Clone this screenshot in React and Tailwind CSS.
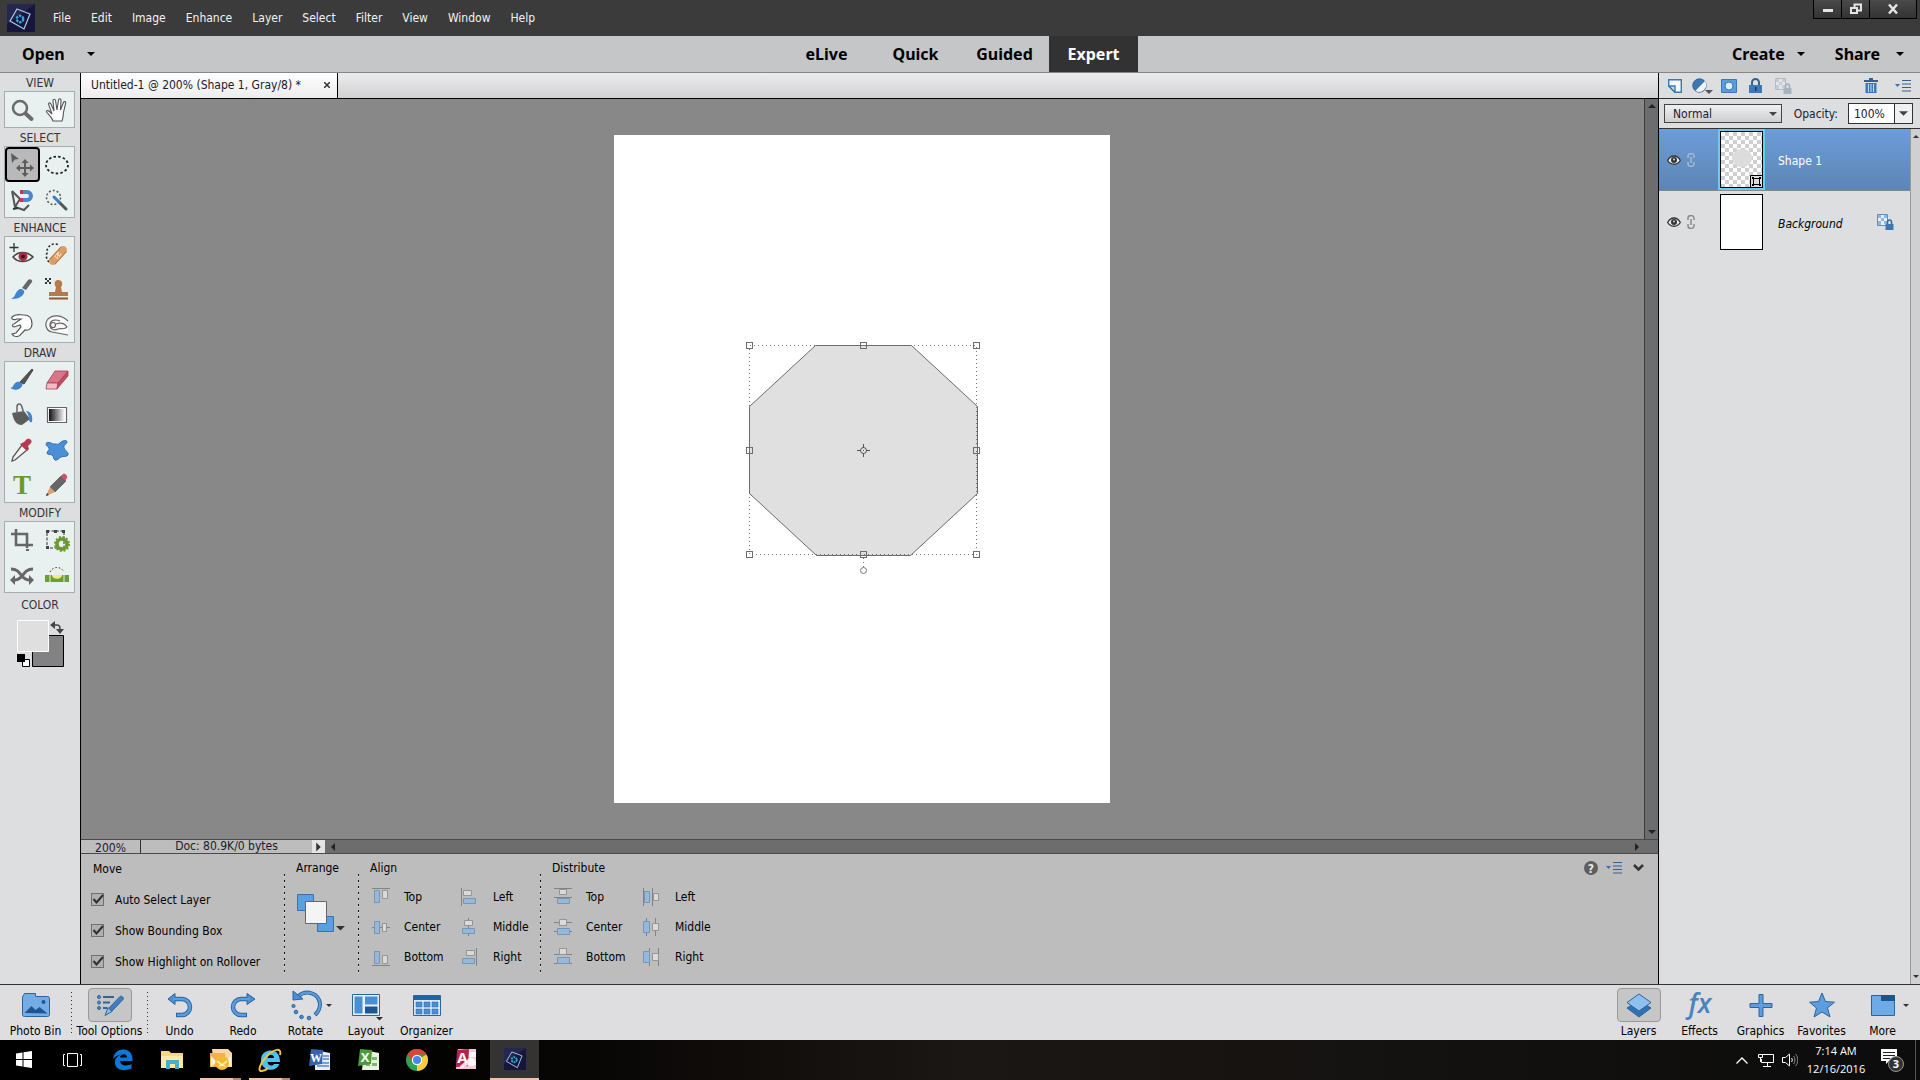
import React, { useState } from "react";

const menus = ["File", "Edit", "Image", "Enhance", "Layer", "Select", "Filter", "View", "Window", "Help"];
const modes = ["eLive", "Quick", "Guided", "Expert"];

function Caret({ className }) {
  return (
    <svg aria-hidden="true" className={className || "w-2 h-1"} viewBox="0 0 8 4" fill="currentColor">
      <path d="M0 0h8L4 4z" />
    </svg>
  );
}

function ElementsLogo({ className }) {
  return (
    <svg aria-hidden="true" className={className} viewBox="0 0 28 28" fill="none">
      <rect width="28" height="28" fill="#16163a" />
      <path d="M0 0h28L0 20z" fill="#26264e" />
      <path d="M10 5l13 5-6 15-14-8z" stroke="#a9cbe8" strokeWidth="1.2" />
      <circle cx="13" cy="15" r="3.2" stroke="#38a8e0" strokeWidth="2.4" strokeDasharray="2.4 1" />
    </svg>
  );
}

function MenuBar() {
  return (
    <header className="flex items-start h-9 bg-[#3b3b3b] text-[#f2f2f2]">
      <ElementsLogo className="w-7 h-7 mt-1 ml-[7px]" />
      <nav className="flex gap-5 h-9 items-center ml-[18px]">
        {menus.map((menu) => (
          <button type="button" key={menu}>
            {menu}
          </button>
        ))}
      </nav>
      <div className="flex ml-auto mr-[3px] h-[19px] border border-t-0 border-black bg-linear-to-b from-[#4a4a4a] to-[#333]">
        <button type="button" aria-label="Minimize" className="w-7 grid place-items-center border-r border-black">
          <svg className="w-3 h-3" viewBox="0 0 12 12" fill="#e4e4e4">
            <path d="M1 6h10v3H1z" />
          </svg>
        </button>
        <button type="button" aria-label="Restore" className="w-7 grid place-items-center border-r border-black">
          <svg className="w-3 h-3" viewBox="0 0 12 12" fill="none" stroke="#e4e4e4" strokeWidth="2">
            <path d="M4.5 4V1.5H11v6H8M1 5h6v5H1z" />
          </svg>
        </button>
        <button type="button" aria-label="Close" className="w-[46px] grid place-items-center">
          <svg className="w-3 h-3" viewBox="0 0 12 12" fill="none" stroke="#e4e4e4" strokeWidth="2.5">
            <path d="M2 1.5l8 9M10 1.5l-8 9" />
          </svg>
        </button>
      </div>
    </header>
  );
}

function ModeBar() {
  return (
    <div className="grid grid-cols-[1fr_auto_1fr] h-[37px] border-b border-[#85868a] bg-[#c5c6c8] text-black font-['Noto_Sans',sans-serif] text-base font-bold">
      <button type="button" className="flex items-center gap-[22px] pl-[22px]">
        Open <Caret />
      </button>
      <div className="flex">
        {modes.map((mode) => (
          <button
            type="button"
            key={mode}
            className={mode === "Expert" ? "w-[89px] bg-[#323232] text-white" : "w-[89px]"}
          >
            {mode}
          </button>
        ))}
      </div>
      <div className="flex justify-end gap-[30px] pr-4">
        <button type="button" className="flex items-center gap-3">
          Create <Caret />
        </button>
        <button type="button" className="flex items-center gap-4">
          Share <Caret />
        </button>
      </div>
    </div>
  );
}

/* toolbox icons, 26 x 26 */
const toolIcons = {
  Zoom: (
    <g fill="none" stroke="#6b6b6b">
      <circle cx="11" cy="11" r="7" strokeWidth="2.5" />
      <path d="M16.5 16.5l6 5.5" strokeWidth="4" strokeLinecap="round" />
    </g>
  ),
  Hand: (
    <path
      d="M9 24c-1-4-4-6-6.500-9-.5-1.500 1.500-2 3-.5L8 17 4.500 7c0-1.500 2-1.500 2.500 0l3 7L9 3.500c0-1.700 2.200-1.700 2.500 0L13 13l1.500-10c.3-1.600 2.500-1.500 2.500.2L16.500 13l3-7.500c.6-1.500 2.500-1 2.200.6L19.500 15c-.5 4 0 5-1.500 9z"
      fill="#fff"
      stroke="#555"
      strokeWidth="1.1"
    />
  ),
  Move: (
    <g fill="#5c5c5c">
      <path d="M2 1l8 6-4 .5L3 11z" />
      <path d="M16 7l3.500 4H17v4h4v-2.500l4 3.500-4 3.500V17h-4v4h2.500L16 25l-3.500-4H15v-4h-4v2.500L7 16l4-3.500V15h4v-4h-2.500z" />
    </g>
  ),
  "Elliptical marquee": (
    <ellipse cx="13" cy="13" rx="11" ry="8.5" fill="none" stroke="#222" strokeWidth="1.8" strokeDasharray="2.5 2.2" />
  ),
  Lasso: (
    <g fill="none">
      <path d="M3 4l3 16 9 3 5-5M3 4l8 8-5 8" stroke="#555" strokeWidth="2" />
      <path d="M4 22l5-1" stroke="#333" strokeWidth="2" />
      <path d="M14 5h4a4 4 0 010 8h-4" stroke="#4a86c8" strokeWidth="4" />
      <path d="M11 5h3M11 13h3" stroke="#c23a50" strokeWidth="4" />
    </g>
  ),
  "Quick selection": (
    <g fill="none">
      <circle cx="9.5" cy="10.5" r="7" stroke="#555" strokeWidth="1.5" strokeDasharray="2 2" />
      <path d="M15 15l7 7" stroke="#555" strokeWidth="3" strokeLinecap="round" />
      <path d="M10 10l5 5" stroke="#3b7dc4" strokeWidth="3" strokeLinecap="round" />
    </g>
  ),
  "Red eye": (
    <g fill="none">
      <path d="M5 1v9M.5 5.5h9" stroke="#333" strokeWidth="1.3" />
      <path d="M4 15c5-6 14-6 20 0-6 6-15 6-20 0z" fill="#eee" stroke="#444" strokeWidth="1.5" />
      <circle cx="14" cy="14.5" r="4.5" fill="#a63048" />
      <circle cx="14" cy="14.5" r="2" fill="#4c1020" />
    </g>
  ),
  "Spot healing": (
    <g fill="none">
      <path d="M5 20a8 8 0 01-2-9 8 8 0 0112-8" stroke="#222" strokeWidth="1.6" strokeDasharray="2 2" />
      <path d="M8 20L20 7" stroke="#a66430" strokeWidth="8" />
      <path d="M8.500 19.500L19.500 7.500" stroke="#dc9c62" strokeWidth="6.5" strokeLinecap="round" />
      <path d="M12 16l4-5" stroke="#f6cfa4" strokeWidth="5" />
      <path d="M12 14h1M15 12h1M14 15h1" stroke="#a66430" strokeWidth="1.2" />
    </g>
  ),
  "Smart brush": (
    <g>
      <path d="M13 11l6-8c2-2 5 0 4 2l-6 8z" fill="#666" />
      <path d="M2 22c5-2 4-8 9-10 3 0 5 2 4 4-2 5-8 6-13 6z" fill="#3f86d0" />
    </g>
  ),
  "Clone stamp": (
    <g>
      <path d="M1 1h2v2H1zM5 1h2v2H5zM3 3h2v2H3zM1 5h2v2H1zM5 5h2v2H5z" fill="#333" />
      <path d="M14 3c5 0 5 5 3 7l1 5h6v4H5v-4h6l1-5c-2-2-2-7 2-7z" fill="#b5794a" />
      <path d="M5 20.5h19v2H5z" fill="#8a5a34" />
    </g>
  ),
  Smudge: (
    <path
      d="M3 5c4-4 8-2 12-2 6 0 8 4 8 9 0 4-3 7-7 6l-4 4c-1 2-4 3-7 2l-2-2 4-1 5-6-1-2-6 2c-2 0-2-3 0-3l7-5H8c-2 1-6 1-5-2z"
      fill="#fff"
      stroke="#555"
      strokeWidth="1.2"
    />
  ),
  Sponge: (
    <g fill="#f8f8f8" stroke="#666" strokeWidth="1.2">
      <path d="M24 9C18 3 9 2 4 7c-4 5-2 12 4 13l16 3" />
      <path d="M16 9c-5-2-10-1-10 4 0 4 4 6 8 4 2-1 7 1 9-2-2-3-6-5-11-3" />
      <circle cx="9" cy="13" r="2.5" />
    </g>
  ),
  Brush: (
    <g>
      <path d="M11 15L23 2l1 1-9 14z" fill="#555" stroke="#444" />
      <path d="M2 21c3 0 2-5 7-6 4 0 5 3 3 5-2 3-7 3-10 1z" fill="#3f86d0" stroke="#2b66a8" strokeWidth=".5" />
    </g>
  ),
  Eraser: (
    <g strokeWidth=".8" stroke="#a84056">
      <path d="M11 4h13L14 16H3z" fill="#d9768a" />
      <path d="M3 16h11l-1 6H2z" fill="#f5bcc6" />
      <path d="M24 4v5L13 22l1-6z" fill="#c24c62" />
    </g>
  ),
  "Paint bucket": (
    <g>
      <path d="M3 11l12-2 6 8-8 6c-5 0-8-3-10-12z" fill="#5c5c5c" />
      <path d="M8 12V5c0-4 4-4 5 0l2 7" fill="none" stroke="#666" strokeWidth="1.5" />
      <path d="M17 9c5 0 7 5 6 11-2 1-3-1-3-3 0-3-1-5-3-8z" fill="#3f86d0" />
    </g>
  ),
  Gradient: (
    <g>
      <defs>
        <linearGradient id="ramp">
          <stop offset="0" stopColor="#111" />
          <stop offset="1" stopColor="#fff" />
        </linearGradient>
      </defs>
      <path d="M3.5 5.5h19v15h-19z" fill="#fff" stroke="#666" strokeWidth="1.2" />
      <path d="M5 7h16v12H5z" fill="url(#ramp)" />
    </g>
  ),
  "Color picker": (
    <g>
      <path d="M13 8l5 5L6 23l-3 1 1-4z" fill="#f4f4f4" stroke="#555" strokeWidth="1.3" />
      <path d="M13 6l2-1 3-3c3-1 6 2 4 4l-3 3 1 3-2 2-7-7z" fill="#b83850" />
    </g>
  ),
  "Custom shape": (
    <path
      d="M11 7c2 0 3 1 5-1 3-3 7-3 7-1s-4 3-3 6 5 4 4 7c-1 2-5 1-7 2s-4 4-6 3-1-4-3-5-5 0-5-2 3-3 2-5-3-2-3-4 3-2 5-1 2 1 4 1z"
      fill="#4a8fd8"
      stroke="#3570b0"
    />
  ),
  Type: (
    <text x="13" y="22" textAnchor="middle" fontSize="27" fontWeight="bold" fill="#6a9a2c" className="font-['Liberation_Serif',serif]">
      T
    </text>
  ),
  Pencil: (
    <g>
      <path d="M6 15L17 4l5 5L11 20z" fill="#666" stroke="#444" strokeWidth=".6" />
      <path d="M17 4l2-2c2-1 5 2 4 4l-2 3z" fill="#d05068" />
      <path d="M6 15l5 5-9 4z" fill="#dca070" />
      <path d="M2 24l1-3 2 2z" fill="#333" />
    </g>
  ),
  Crop: (
    <g fill="none" stroke="#666" strokeWidth="2.6">
      <path d="M7 2v16h17M2 7h16v14" />
      <path d="M17 23h3" strokeWidth="2" />
    </g>
  ),
  Recompose: (
    <g>
      <path d="M3 4h17v17H3z" fill="none" stroke="#333" strokeDasharray="3 1.5" />
      <path d="M2 3h3v3H2zM18 3h3v3h-3zM2 19h3v3H2zM10 3h3v3h-3z" fill="#444" />
      <circle cx="18" cy="17" r="5" fill="none" stroke="#6a9a2c" strokeWidth="3.5" />
      <circle cx="18" cy="17" r="7" fill="none" stroke="#6a9a2c" strokeWidth="2" strokeDasharray="2 1.7" />
    </g>
  ),
  "Content-aware move": (
    <g fill="none" stroke="#666" strokeWidth="3">
      <path d="M2 7c11 0 9 11 18 11M24 7c-11 0-9 11-18 11" />
      <path d="M20 13l5 5-5 5zM6 13l-5 5 5 5z" fill="#666" stroke="none" />
    </g>
  ),
  Straighten: (
    <g>
      <path d="M6 10c3-6 11-6 14 0" fill="none" stroke="#333" strokeDasharray="1.5 2" />
      <path d="M1 13h24v7H1z" fill="#6d9e35" />
      <path d="M6 13v7M20 13v7" stroke="#e8f0e0" />
      <path d="M8 13h10c0 5-10 5-10 0z" fill="#f4eb82" />
    </g>
  ),
};

const toolGroups = [
  { name: "VIEW", tools: ["Zoom", "Hand"] },
  { name: "SELECT", tools: ["Move", "Elliptical marquee", "Lasso", "Quick selection"] },
  { name: "ENHANCE", tools: ["Red eye", "Spot healing", "Smart brush", "Clone stamp", "Smudge", "Sponge"] },
  { name: "DRAW", tools: ["Brush", "Eraser", "Paint bucket", "Gradient", "Color picker", "Custom shape", "Type", "Pencil"] },
  { name: "MODIFY", tools: ["Crop", "Recompose", "Content-aware move", "Straighten"] },
];

function Toolbox() {
  const [tool, setTool] = useState("Move");

  return (
    <aside className="w-[81px] shrink-0 border-r border-black bg-[#dddee0] px-1 text-[#333]">
      {toolGroups.map((group) => (
        <section key={group.name}>
          <h2 className="h-[18px] leading-5 text-center">{group.name}</h2>
          <div className="grid grid-cols-2 w-[71px] border border-[#a9acae] bg-[#e9f0f0]">
            {group.tools.map((name) => (
              <button
                type="button"
                key={name}
                title={name}
                onClick={() => setTool(name)}
                className={
                  tool === name
                    ? "h-[35px] grid place-items-center rounded-sm border-2 border-black bg-[#b9b9b9]"
                    : "h-[35px] grid place-items-center"
                }
              >
                <svg aria-hidden="true" className="w-[26px] h-[26px] overflow-visible" viewBox="0 0 26 26">
                  {toolIcons[name]}
                </svg>
              </button>
            ))}
          </div>
        </section>
      ))}
      <section>
        <h2 className="h-[26px] leading-6 text-center">COLOR</h2>
        <svg role="img" aria-label="Foreground and background color" className="w-12 h-12 mx-auto" viewBox="0 0 48 48">
          <path d="M16.5 16.5h31v31h-31z" fill="#828282" stroke="#000" />
          <path d="M1.5 1.5h31v31h-31z" fill="#dfdfdf" stroke="#fff" />
          <path d="M37 6h4c3 0 3 2 3 5" fill="none" stroke="#444" strokeWidth="1.5" />
          <path d="M34 6l5-4v8zM40 10h8l-4 5z" fill="#444" />
          <path d="M6.5 40.5h7v7h-7z" fill="#fff" stroke="#000" />
          <path d="M1 35h8v8H1z" />
        </svg>
      </section>
    </aside>
  );
}

const handles = [
  [749, 345], [863, 345], [976, 345],
  [749, 450], [976, 450],
  [749, 554], [863, 554], [976, 554],
];

function Artboard() {
  return (
    <div className="w-[496px] h-[668px] bg-white">
      <svg role="img" aria-label="Octagon shape" className="w-full h-full" viewBox="614 135 496 668" fill="none" shapeRendering="crispEdges">
        <path
          d="M815.5 345.5H911.5L977.5 406.5V493.5L910.5 555.5H816.5L749.5 493.5V406.5z"
          fill="#e0e0e0"
          stroke="#6a6a6a"
          shapeRendering="auto"
        />
        <path d="M749.5 345.5h227v209h-227zM863.5 558v9" stroke="#777" strokeDasharray="1 3" />
        {handles.map(([x, y]) => (
          <rect key={`${x}-${y}`} x={x - 2.5} y={y - 2.5} width="6" height="6" stroke="#6e6e6e" />
        ))}
        <g stroke="#555" shapeRendering="auto">
          <circle cx="863.5" cy="450.5" r="3" />
          <path d="M863.5 444v4M863.5 453v4M857 450.5h4M866 450.5h4M863 450.5h1" />
          <circle cx="863.5" cy="570.5" r="3" stroke="#777" fill="#fff" />
        </g>
      </svg>
    </div>
  );
}

function Workspace() {
  return (
    <>
      <div className="flex h-[26px] border-b border-black bg-linear-to-b from-[#ececee] to-[#d2d2d3] text-[#1b1b2e]">
        <div className="flex items-center justify-between w-[257px] pl-[10px] pr-[7px] pb-px border-r border-black bg-linear-to-b from-white to-[#ececec]">
          <span className="whitespace-pre">Untitled-1 @ 200% (Shape 1, Gray/8) *</span>
          <button type="button" aria-label="Close document">
            <svg className="w-[6px] h-[6px]" viewBox="0 0 6 6" stroke="#333" strokeWidth="1.5">
              <path d="M0 0l6 6M6 0L0 6" />
            </svg>
          </button>
        </div>
      </div>
      <div className="flex grow bg-[#888] min-h-[740px]">
        <main className="flex grow items-center justify-center pr-0.5">
          <Artboard />
        </main>
        <div className="flex flex-col items-center justify-between w-[14px] border-l border-[#3a3a3a] bg-[#6d6d6d] text-[#222] py-[5px]">
          <Caret className="w-2 h-1 rotate-180" />
          <Caret />
        </div>
      </div>
      <div className="flex h-[15px] border-y border-[#4a4a4a] bg-[#6d6d6d] leading-[13px] text-[#1b1b2e] overflow-hidden">
        <div className="w-[60px] border-r border-[#333] bg-[#bdbdbd] text-center leading-4">200%</div>
        <div className="w-[171px] bg-[#bdbdbd] text-center">Doc: 80.9K/0 bytes</div>
        <button type="button" aria-label="Status menu" className="w-[13px] grid place-items-center bg-[#e4e4e4] text-[#333]">
          <Caret className="w-[9px] h-[6px] -rotate-90" />
        </button>
        <div className="flex grow items-center justify-between pl-1 pr-[17px] text-[#222]">
          <Caret className="w-2 h-1 rotate-90" />
          <Caret className="w-2 h-1 -rotate-90" />
        </div>
      </div>
    </>
  );
}

/* each icon: rule lines, blue box, white box */
const alignItems = [
  { label: "Top", lines: "M0 .5h18", blue: "M2.5 2.5h5v12h-5z", white: "M10.5 2.5h5v8h-5z" },
  { label: "Left", lines: "M.5 0v18", blue: "M2.5 10.5h12v5h-12z", white: "M2.5 2.5h8v5h-8z" },
  { label: "Center", lines: "M0 9.5h18", blue: "M2.5 3.5h5v12h-5z", white: "M10.5 5.5h4v8h-4z" },
  { label: "Middle", lines: "M7.5 0v18", blue: "M1.5 10.5h12v5h-12z", white: "M3.5 2.5h8v5h-8z" },
  { label: "Bottom", lines: "M0 17.5h18", blue: "M2.5 3.5h5v12h-5z", white: "M10.5 7.5h5v8h-5z" },
  { label: "Right", lines: "M15.5 0v18", blue: "M1.5 10.5h12v5h-12z", white: "M5.5 2.5h8v5h-8z" },
];

const distributeItems = [
  { label: "Top", lines: "M0 .5h18M0 9.5h18", blue: "M3.5 10.5h12v5h-12z", white: "M5.5 1.5h7v5h-7z" },
  { label: "Left", lines: "M.5 0v18M9.5 0v18", blue: "M1.5 3.5h5v11h-5z", white: "M10.5 5.5h5v7h-5z" },
  { label: "Center", lines: "M0 4.5h18M0 13.5h18", blue: "M3.5 10.5h12v6h-12z", white: "M5.5 1.5h7v6h-7z" },
  { label: "Middle", lines: "M3.5 0v18M12.5 0v18", blue: "M.5 3.5h6v11h-6z", white: "M9.5 5.5h6v7h-6z" },
  { label: "Bottom", lines: "M0 6.5h18M0 15.5h18", blue: "M3.5 9.5h12v6h-12z", white: "M5.5 .5h7v6h-7z" },
  { label: "Right", lines: "M6.5 0v18M15.5 0v18", blue: "M.5 3.5h6v11h-6z", white: "M9.5 5.5h6v7h-6z" },
];

function ArrangeGrid({ title, items }) {
  return (
    <section className="pt-[6px]">
      <h3 className="h-4 leading-4">{title}</h3>
      <div className="grid grid-cols-[89px_89px] mt-[6px] ml-[2px]">
        {items.map((item) => (
          <button type="button" key={item.label} className="flex items-center gap-[14px] h-[30px]">
            <svg aria-hidden="true" className="w-[18px] h-[18px]" viewBox="0 0 18 18">
              <path d={item.lines} stroke="#828282" />
              <path d={item.blue} fill="#97b8d8" stroke="#7497b8" />
              <path d={item.white} fill="#dadada" stroke="#949494" />
            </svg>
            {item.label}
          </button>
        ))}
      </div>
    </section>
  );
}

function DottedRule() {
  return <div className="w-[3px] h-[100px] mt-5 bg-[repeating-linear-gradient(#111_0_2px,#e8e8e8_2px_3px,transparent_3px_6px)] bg-clip-content px-px" />;
}

function CheckOption({ label }) {
  const [checked, setChecked] = useState(true);

  return (
    <label className="flex items-center gap-[11px] h-[31px]">
      <span className="grid">
        <input
          type="checkbox"
          checked={checked}
          onChange={(e) => setChecked(e.target.checked)}
          className="peer col-start-1 row-start-1 appearance-none w-[13px] h-[13px] border border-[#707070] bg-[#b0b0b0]"
        />
        <svg
          aria-hidden="true"
          className="hidden peer-checked:block col-start-1 row-start-1 w-[13px] h-[13px] pointer-events-none"
          viewBox="0 0 13 13"
          fill="none"
          stroke="#2f2f2f"
          strokeWidth="2"
        >
          <path d="M2.5 6l3 3.5L12 2" />
        </svg>
      </span>
      {label}
    </label>
  );
}

function PanelMenuIcon() {
  return (
    <svg aria-hidden="true" className="w-4 h-3" viewBox="0 0 16 12">
      <path d="M0 4h5L2.5 7z" fill="#3570ad" />
      <path d="M7 .5h9M7 4h9M7 7.5h9M7 11h9" stroke="#35608c" />
    </svg>
  );
}

function ToolOptions() {
  return (
    <div className="flex h-[130px] bg-[#bdbdbd] text-black">
      <section className="w-[202px] pl-[10px] pt-[6px]">
        <h3 className="h-[18px] leading-[18px] pl-[2px]">Move</h3>
        <div className="mt-[6px]">
          <CheckOption label="Auto Select Layer" />
          <CheckOption label="Show Bounding Box" />
          <CheckOption label="Show Highlight on Rollover" />
        </div>
      </section>
      <DottedRule />
      <section className="w-[71px] pl-[10px] pt-[6px]">
        <h3 className="h-4 leading-4">Arrange</h3>
        <button type="button" aria-label="Arrange" className="mt-[17px] ml-px">
          <svg className="w-12 h-[39px]" viewBox="0 0 48 39">
            <path d="M.5 1.5h16v16H.5z" fill="#5a9fe0" stroke="#3a72ab" />
            <path d="M20.5 23.5h16v15h-16z" fill="#5a9fe0" stroke="#3a72ab" />
            <path d="M8.5 8.5h21v22h-21z" fill="#f4f4f4" stroke="#666" />
            <path d="M39 33h9l-4.500 4.500z" fill="#333" />
          </svg>
        </button>
      </section>
      <DottedRule />
      <div className="w-[179px] pl-[10px]">
        <ArrangeGrid title="Align" items={alignItems} />
      </div>
      <DottedRule />
      <div className="pl-[10px]">
        <ArrangeGrid title="Distribute" items={distributeItems} />
      </div>
      <div className="flex items-start gap-2 ml-auto pt-[7px] pr-[14px]">
        <button type="button" aria-label="Help">
          <svg className="w-[14px] h-[14px]" viewBox="0 0 14 14">
            <circle cx="7" cy="7" r="7" fill="#5e5e5e" />
            <text x="7" y="11.5" textAnchor="middle" fontSize="12" fontWeight="bold" fill="#e8e8e8">
              ?
            </text>
          </svg>
        </button>
        <button type="button" aria-label="Panel menu" className="pt-px">
          <PanelMenuIcon />
        </button>
        <button type="button" aria-label="Collapse panel" className="pt-[3px] pl-[3px]">
          <svg className="w-[11px] h-2" viewBox="0 0 11 8" fill="none" stroke="#333" strokeWidth="2.5">
            <path d="M1 1l4.500 4.500L10 1" />
          </svg>
        </button>
      </div>
    </div>
  );
}

function LockedPixels({ className }) {
  return (
    <svg aria-hidden="true" className={className} viewBox="0 0 17 16">
      <path d="M.5 .5h10v11H.5z" fill="#e8f0f8" stroke="#5d90c2" />
      <path d="M1 1h3v3H1zM7 1h3v3H7zM4 4h3v3H4zM1 7h3v4H1zM7 7h3v3H7z" fill="#8db8e0" />
      <path d="M10.5 10V8a2 2 0 014 0v2" fill="none" stroke="#2f6ba6" strokeWidth="1.5" />
      <path d="M8.5 10h8v6h-8z" fill="#3c78b4" />
    </svg>
  );
}

function EyeIcon() {
  return (
    <svg aria-hidden="true" className="w-[14px] h-[10px]" viewBox="0 0 14 10">
      <path d="M.7 5.500c3-6 9.600-6 12.600 0-3 5-9.600 5-12.600 0z" fill="#eee" stroke="#333" strokeWidth="1.3" />
      <circle cx="7" cy="5" r="3" fill="#333" />
      <circle cx="7" cy="4.5" r="1" fill="#ddd" />
    </svg>
  );
}

function LinkIcon({ className }) {
  return (
    <svg aria-hidden="true" className={className} viewBox="0 0 8 14" fill="none" stroke="currentColor" strokeWidth="1.5">
      <path d="M1 5V3a3 2.500 0 016 0v2M1 9v2a3 2.500 0 006 0V9M4 4v6" />
    </svg>
  );
}

function LayersPanel() {
  const [blend, setBlend] = useState("Normal");
  const [opacity, setOpacity] = useState("100%");

  return (
    <aside className="flex flex-col w-[262px] shrink-0 border-l border-black bg-[#dddee0]">
      <div className="flex items-center h-[26px] border-b border-[#333] pl-[9px] pr-[9px]">
        <button type="button" aria-label="New layer">
          <svg className="w-[14px] h-[14px]" viewBox="0 0 14 14">
            <path d="M.7 .7h12.600v12.600H7L.7 7z" fill="#f4f8fc" stroke="#3a78b5" strokeWidth="1.4" />
            <path d="M.7 7H7v6.300z" fill="#c8ddf0" stroke="#3a78b5" strokeWidth="1.4" />
          </svg>
        </button>
        <button type="button" aria-label="Adjustment layer" className="ml-[10px]">
          <svg className="w-[21px] h-4" viewBox="0 0 21 16">
            <circle cx="7.5" cy="7.5" r="6.7" fill="#3c78b4" stroke="#2f6294" />
            <path d="M13 3a7 7 0 01-9.500 9.800z" fill="#f2f6fa" />
            <path d="M13 12h8l-4 4z" fill="#555" />
          </svg>
        </button>
        <button type="button" aria-label="Layer mask" className="ml-2">
          <svg className="w-4 h-[14px]" viewBox="0 0 16 14">
            <path d="M.5 .5h15v13H.5z" fill="#5a9bdc" stroke="#3a78b5" />
            <circle cx="8" cy="7" r="4" fill="#e3eefa" stroke="#3a78b5" />
          </svg>
        </button>
        <button type="button" aria-label="Lock all pixels" className="ml-3">
          <svg className="w-[13px] h-4" viewBox="0 0 13 16">
            <path d="M3 8V4.500a3.500 3.500 0 017 0V8" fill="none" stroke="#2f6294" strokeWidth="2" />
            <path d="M0 7h13v8H0z" fill="#3c78b4" />
            <path d="M6 9h1.500v4H6z" fill="#16395c" />
          </svg>
        </button>
        <button type="button" aria-label="Lock transparent pixels" disabled className="ml-[13px] opacity-40">
          <LockedPixels className="w-[17px] h-4 grayscale-50" />
        </button>
        <button type="button" aria-label="Delete layer" className="ml-auto">
          <svg className="w-[14px] h-[15px]" viewBox="0 0 14 15">
            <path d="M5 0h4v2H5zM0 2h14v2H0z" fill="#2f6294" />
            <path d="M1.5 5h11v10h-11z" fill="#3c78b4" />
            <path d="M4.5 6v8M7 6v8M9.5 6v8" stroke="#c8ddf0" />
          </svg>
        </button>
        <button type="button" aria-label="Panel menu" className="ml-[17px]">
          <PanelMenuIcon />
        </button>
      </div>

      <div className="flex items-center h-[30px] border-b border-[#333] pl-[5px] pr-[7px] text-[#1b1b2e]">
        <span className="grid items-center w-[118px]">
          <select
            aria-label="Blend mode"
            value={blend}
            onChange={(e) => setBlend(e.target.value)}
            className="col-start-1 row-start-1 appearance-none h-[19px] pl-2 leading-4 border border-[#444] bg-linear-to-b from-[#f0f0f0] to-[#cfcfcf]"
          >
            <option>Normal</option>
            <option>Multiply</option>
            <option>Screen</option>
            <option>Overlay</option>
          </select>
          <Caret className="col-start-1 row-start-1 justify-self-end mr-[5px] w-2 h-1 pointer-events-none text-[#444]" />
        </span>
        <label htmlFor="opacity" className="ml-auto mr-[10px]">
          Opacity:
        </label>
        <input
          id="opacity"
          value={opacity}
          onChange={(e) => setOpacity(e.target.value)}
          className="w-[47px] h-[21px] pl-[5px] border border-[#333] bg-white"
        />
        <button type="button" aria-label="Opacity slider" className="w-[18px] h-[21px] grid place-items-center border border-l-0 border-[#333] bg-[#f0f0f0] text-[#444]">
          <Caret className="w-[9px] h-[5px]" />
        </button>
      </div>

      <div className="flex grow">
        <ul className="grow">
          <li className="flex items-center h-[62px] pl-2 border-b border-[#888] bg-linear-to-b from-[#6c9dd9] to-[#5d85b5] text-white">
            <EyeIcon />
            <LinkIcon className="w-2 h-[14px] ml-[6px] text-[#a9b9cc]" />
            <span className="relative w-[47px] h-[61px] ml-[23px] p-[2px] bg-[#68cdf4]">
              <span className="grid place-items-center w-full h-full border border-black bg-[repeating-conic-gradient(#cfcfcf_0_25%,#fff_0_50%)] bg-size-[8px_8px]">
                <span className="w-5 h-[18px] rounded-full bg-[#dcdcdc] mb-1" />
              </span>
              <svg aria-hidden="true" className="absolute right-[2px] bottom-[2px] w-[13px] h-[13px]" viewBox="0 0 13 13">
                <path d="M.5 .5h12v12H.5z" fill="#ddd" stroke="#000" />
                <path d="M3.5 3.5h6v6h-6z" fill="none" stroke="#000" />
                <path d="M2 2h2v2H2zM9 2h2v2H9zM2 9h2v2H2zM9 9h2v2H9z" />
              </svg>
            </span>
            <span className="ml-[13px] pt-[3px]">Shape 1</span>
          </li>
          <li className="flex items-center h-[62px] pl-2 pr-4 text-black">
            <EyeIcon />
            <LinkIcon className="w-2 h-[14px] ml-[6px] text-[#8b8b8b]" />
            <span className="w-[43px] h-14 ml-[25px] border border-black bg-white" />
            <span className="ml-[15px] pt-[3px] italic">Background</span>
            <LockedPixels className="w-[17px] h-4 ml-auto" />
          </li>
        </ul>
        <div className="flex flex-col items-center justify-between w-[10px] py-[6px] border-l border-[#999] bg-[#d0d0d2] text-[#333]">
          <Caret className="w-[6px] h-[3px] rotate-180" />
          <Caret className="w-[6px] h-[3px]" />
        </div>
      </div>
    </aside>
  );
}

const blue = "#4a8fd4";
const edge = "#2c649c";

/* bottom bar icons, 28 x 28 */
const barIcons = {
  "Photo Bin": (
    <g stroke={edge}>
      <path d="M2.5 2.5h11v3h12a2 2 0 012 2v16a2 2 0 01-2 2h-23a2 2 0 01-2-2V6z" fill="#74ade6" />
      <path d="M2.5 22l7-7 4 4 4-3 8 6.500z" fill="#1d5690" stroke="none" />
      <circle cx="21.5" cy="11" r="2" fill="#1d5690" stroke="none" />
    </g>
  ),
  "Tool Options": (
    <g fill="none" stroke={edge}>
      <circle cx="3" cy="6" r="1.5" fill={blue} />
      <circle cx="3" cy="11.5" r="1.5" fill={blue} />
      <circle cx="3" cy="17" r="1.5" fill={blue} />
      <path d="M7 6h11M7 11.500h7M7 17h4" strokeWidth="2" />
      <path d="M13 17L24 5.500c2-1 4 1 3 3L16 20z" fill="#3f7fbf" />
      <path d="M12 16.500l4 4-7 4z" fill="#8bbcec" />
    </g>
  ),
  Undo: (
    <g fill="none">
      <path d="M7 8h9a7.500 7.500 0 010 16h-6" stroke={edge} strokeWidth="4.5" />
      <path d="M9 2.500v11L2 8z" fill={blue} stroke={edge} />
      <path d="M7 8h9a7.500 7.500 0 010 16h-5" stroke="#5b9ddf" strokeWidth="2.6" />
    </g>
  ),
  Redo: (
    <g fill="none">
      <path d="M20 8h-8a7.500 7.500 0 000 16h6" stroke={edge} strokeWidth="4.5" />
      <path d="M18 2.500v11L26 8z" fill={blue} stroke={edge} />
      <path d="M21 8h-9a7.500 7.500 0 000 16h5" stroke="#5b9ddf" strokeWidth="2.6" />
    </g>
  ),
  Rotate: (
    <g fill="none">
      <path d="M6 5.500C14-2 27 2 28 13c0 5-2 8-5 11" stroke={edge} strokeWidth="4" />
      <path d="M6 5.500C14-2 27 2 28 13c0 5-2 8-4.500 10.500" stroke="#5b9ddf" strokeWidth="2.2" />
      <path d="M1 0l10 8-10 1z" fill={blue} stroke={edge} />
      <g fill={blue} stroke={edge}>
        <circle cx="1.5" cy="15" r="1.6" />
        <circle cx="4" cy="21" r="1.8" />
        <circle cx="9.5" cy="26" r="1.8" />
        <circle cx="17" cy="27" r="1.8" />
      </g>
    </g>
  ),
  Layout: (
    <g>
      <path d="M.5 3.5h27v21H.5z" fill="#e8f2fc" stroke={edge} />
      <path d="M2.5 5.5h8v17h-8zM13 5.5h12.500v8H13z" fill={blue} />
      <path d="M13 15.5h12.500v7H13z" fill="#1d5690" />
      <path d="M24 26h7l-3.500 3.500z" fill="#333" />
    </g>
  ),
  Organizer: (
    <g>
      <path d="M.5 4.5h27v20H.5z" fill="#d8e8f8" stroke={edge} />
      <path d="M1 5h26v4H1z" fill="#1f62a6" />
      <path d="M3 11h6v5H3zM11 11h6v5h-6zM19 11h6v5h-6zM3 18h6v5H3zM11 18h6v5h-6zM19 18h6v5h-6z" fill={blue} stroke={edge} strokeWidth=".5" />
    </g>
  ),
  Layers: (
    <g stroke={edge}>
      <path d="M2 17l12 9 12-9-4-2.500-8 5-8-5z" fill="#2f73b5" />
      <path d="M14 3l12 8.500L14 20 2 11.500z" fill="#8fc0f0" />
    </g>
  ),
  Effects: (
    <text x="14" y="22" textAnchor="middle" fontSize="27" fontStyle="italic" fontWeight="600" fill="#4784c0" className="font-['Open_Sans',sans-serif]">
      fx
    </text>
  ),
  Graphics: <path d="M12 3.5h4v9h9v4h-9v9h-4v-9H3v-4h9z" fill="#5b9ddf" stroke={edge} />,
  Favorites: <path d="M14 2l3.500 8.500 9 .7-7 5.700 2.500 9L14 21l-8 5 2.500-9-7-5.800 9-.7z" fill="#5b9ddf" stroke={edge} />,
  More: (
    <g>
      <path d="M2.5 4.5h23v20h-23z" fill="#6eaae6" stroke={edge} />
      <path d="M12 4h14v6H12z" fill="#175696" />
    </g>
  ),
};

function BarButton({ name, width, pressed, caret }) {
  return (
    <button type="button" className={`${width} flex flex-col items-center`}>
      <span
        className={
          pressed
            ? "relative grid place-items-center h-9 px-[7px] rounded border border-[#999] bg-[#c6c6c6]"
            : "relative grid place-items-center h-9 px-2"
        }
      >
        <svg aria-hidden="true" className="w-7 h-7 overflow-visible" viewBox="0 0 28 28">
          {barIcons[name]}
        </svg>
        {caret && <Caret className="absolute -right-1 top-4 w-[6px] h-[3px] text-[#333]" />}
      </span>
      <span className="leading-[18px] whitespace-nowrap">{name}</span>
    </button>
  );
}

function BarRule() {
  return <div className="w-px my-1 bg-[repeating-linear-gradient(#333_0_1px,transparent_1px_4px)]" />;
}

function ActionBar() {
  return (
    <div className="flex h-14 pt-[3px] border-t border-[#333] bg-[#dedee0] text-black">
      <BarButton name="Photo Bin" width="w-[71px]" />
      <BarRule />
      <BarButton name="Tool Options" width="w-[75px]" pressed />
      <BarRule />
      <BarButton name="Undo" width="w-[63px]" />
      <BarButton name="Redo" width="w-16" />
      <BarButton name="Rotate" width="w-[61px]" caret />
      <BarButton name="Layout" width="w-[60px]" />
      <BarButton name="Organizer" width="w-[61px]" />
      <div className="flex ml-auto pr-[7px]">
        <BarButton name="Layers" width="w-[61px]" pressed />
        <BarButton name="Effects" width="w-[61px]" />
        <BarButton name="Graphics" width="w-[61px]" />
        <BarButton name="Favorites" width="w-[61px]" />
        <BarButton name="More" width="w-[61px]" caret />
      </div>
    </div>
  );
}

/* taskbar icons, 24 x 24 */
const taskIcons = [
  {
    name: "Start",
    icon: <path d="M3 5.5l6.500-1V11H3zM10.500 4.300L19 3v8h-8.500zM3 12h6.500v6.500L3 17.500zM10.500 12H19v8l-8.500-1.200z" fill="#fff" />,
  },
  {
    name: "Task View",
    icon: <path d="M5.5 5.5h10v13h-10zM3 6.5H1.500v11H3M18 6.5h1.500v11H18" fill="none" stroke="#fff" />,
  },
  {
    name: "Edge",
    icon: (
      <path
        d="M2 11C3 4 8 1 13 1.500c6 .5 9 5 8.500 11.500H9c.5 5 7 5.500 11.500 3v4.500C11 24.500 3 21 4 13c.5-3 3-5.500 6-6.500C7 7 4 8.500 2 11zm7-1.500h7c0-4.500-6.500-4.500-7 0z"
        fill="#0b78d8"
      />
    ),
  },
  {
    name: "File Explorer",
    icon: (
      <g>
        <path d="M1 3h8l2 2h12v15H1z" fill="#f5d77c" />
        <path d="M1 8h22v12H1z" fill="#fde9a6" />
        <path d="M6 21v-9h13v9h-4v-5h-5v5z" fill="#45aed2" />
      </g>
    ),
  },
  {
    name: "Outlook",
    running: true,
    icon: (
      <g>
        <path d="M3 1h16l4 4v14H5z" fill="#fbd9a0" />
        <path d="M1 5h15v14H1z" fill="#f3b04c" />
        <path d="M2 8l6 6-6 5zM22 8l-6 6 6 5z" fill="#fff2d0" />
        <circle cx="13" cy="15" r="7" fill="#f2b933" />
        <path d="M8 13l5 4 5-4M10 18l3-1 3 1" fill="none" stroke="#fff3c4" strokeWidth="1.5" />
      </g>
    ),
  },
  {
    name: "Internet Explorer",
    running: true,
    icon: (
      <g>
        <path
          d="M3 12C3 5 8 2.500 13 2.500S22 6 22 14H9.500c.5 4 5 4.500 6.500 2h5.500C18 25 3 23.500 3 12zm6.500-2H16c0-4-6-4.500-6.500 0z"
          fill="#4cc3ee"
        />
        <path d="M22 7c2-8-6-6-13 1S-1 24 4 23c2 0 4-1 6-3" fill="none" stroke="#f0c43c" strokeWidth="2" />
      </g>
    ),
  },
  {
    name: "Word",
    icon: (
      <g>
        <path d="M8 2l15 3v17H8z" fill="#e6eefb" />
        <path d="M16 8h6M16 11h6M10 15h12M10 18h12" stroke="#5a84c8" strokeWidth="1.5" />
        <path d="M4 1l12 1-1 14-13 2z" fill="#3563ae" />
        <text x="9" y="14" textAnchor="middle" fontSize="12" fontWeight="bold" fill="#fff" className="font-['Liberation_Serif',serif]">
          W
        </text>
      </g>
    ),
  },
  {
    name: "Excel",
    icon: (
      <g>
        <path d="M8 2l15 3v17H6z" fill="#e6f4e0" />
        <path d="M16 9h5v3h-5zM10 15h4v3h-4zM16 15h5v3h-5z" fill="#7db769" />
        <path d="M4 1l12 1-1 14-13 2z" fill="#4c9a3e" />
        <text x="9" y="14" textAnchor="middle" fontSize="13" fontWeight="bold" fill="#fff">
          X
        </text>
      </g>
    ),
  },
  {
    name: "Chrome",
    icon: (
      <g>
        <circle cx="12" cy="12" r="11" fill="#2fa34f" />
        <path d="M12 12L2.500 6.500A11 11 0 0121.500 6.500H12z" fill="#dd4437" />
        <path d="M12 12L21.500 6.500A11 11 0 0112 23z" fill="#fccc3b" />
        <path d="M12 12L2.500 6.500l5 8z" fill="#dd4437" />
        <circle cx="12" cy="12" r="5.2" fill="#fff" />
        <circle cx="12" cy="12" r="4" fill="#4586ef" />
      </g>
    ),
  },
  {
    name: "Access",
    icon: (
      <g>
        <path d="M4 1h18v20H2z" fill="#f4c8d8" />
        <path d="M3 2l12-1-1 17-12 1z" fill="#b5204e" />
        <path d="M15 4h7v5h-7zM13 12c4-5 9-1 9 3s-6 4-8 2l-8 4v-3z" fill="#fff" opacity=".85" />
        <text x="8.5" y="15" textAnchor="middle" fontSize="15" fontWeight="bold" fill="#fff">
          A
        </text>
      </g>
    ),
  },
];

function Taskbar() {
  return (
    <footer className="flex h-10 bg-linear-to-r from-black via-[#1b1714] to-[#0c0c0c] text-white font-['Open_Sans',sans-serif]">
      {taskIcons.map((task) => (
        <button type="button" key={task.name} title={task.name} className="relative w-[49px] grid place-items-center">
          <svg aria-hidden="true" className="w-6 h-6" viewBox="0 0 24 24">
            {task.icon}
          </svg>
          {task.running && <span className="absolute bottom-0 inset-x-1 h-[2px] bg-[#f5bfa8] border-r-8 border-[#b88a78]" />}
        </button>
      ))}
      <button type="button" title="Photoshop Elements" className="grid place-items-center w-[49px] border-b-2 border-[#f5bfa8] bg-[#333]">
        <ElementsLogo className="w-[22px] h-[22px]" />
      </button>
      <div className="flex items-center ml-auto">
        <button type="button" aria-label="Show hidden icons">
          <svg className="w-3 h-[7px]" viewBox="0 0 12 7" fill="none" stroke="#fff" strokeWidth="1.3">
            <path d="M.5 6.5L6 1l5.500 5.500" />
          </svg>
        </button>
        <button type="button" aria-label="Network" className="ml-[10px]">
          <svg className="w-4 h-[14px]" viewBox="0 0 16 14" fill="none" stroke="#fff">
            <path d="M4.5 1.5h11v8h-12V6M9.5 10v3M5 13.5h8M.5 1.5h4v3h-4zM2.5 5v4" />
          </svg>
        </button>
        <button type="button" aria-label="Volume" className="ml-2">
          <svg className="w-4 h-[14px]" viewBox="0 0 16 14" fill="none" stroke="#fff">
            <path d="M.5 4.5h3l4-3.500v12l-4-3.500h-3zM9.500 5c1 1 1 3 0 4" />
            <path d="M11.5 3c2 2 2 6 0 8M13.5 1c3 3 3 9 0 12" stroke="#888" />
          </svg>
        </button>
        <time dateTime="2016-12-16T07:14" className="w-[68px] ml-1 text-center leading-[18px] text-[11px]">
          <span className="block">7:14 AM</span>
          <span className="block">12/16/2016</span>
        </time>
        <button type="button" aria-label="Notifications" className="ml-[10px]">
          <svg className="w-6 h-6" viewBox="0 0 24 24">
            <path d="M1 1h16v12H9l-3 3v-3H1z" fill="#fff" />
            <path d="M3 4.5h12M3 7.5h12M3 10.5h7" stroke="#222" />
            <circle cx="16" cy="16" r="7.5" fill="#333" stroke="#999" />
            <text x="16" y="20" textAnchor="middle" fontSize="11" fontWeight="bold" fill="#fff">
              3
            </text>
          </svg>
        </button>
        <span className="h-10 ml-[11px] w-[5px] border-l border-[#555]" />
      </div>
    </footer>
  );
}

function App() {
  return (
    <div className="flex flex-col min-h-screen font-['DejaVu_Sans_Condensed','DejaVu_Sans',sans-serif] text-xs select-none">
      <MenuBar />
      <ModeBar />
      <div className="flex grow">
        <Toolbox />
        <div className="flex flex-col grow">
          <Workspace />
          <ToolOptions />
        </div>
        <LayersPanel />
      </div>
      <ActionBar />
      <Taskbar />
    </div>
  );
}

export default App;
